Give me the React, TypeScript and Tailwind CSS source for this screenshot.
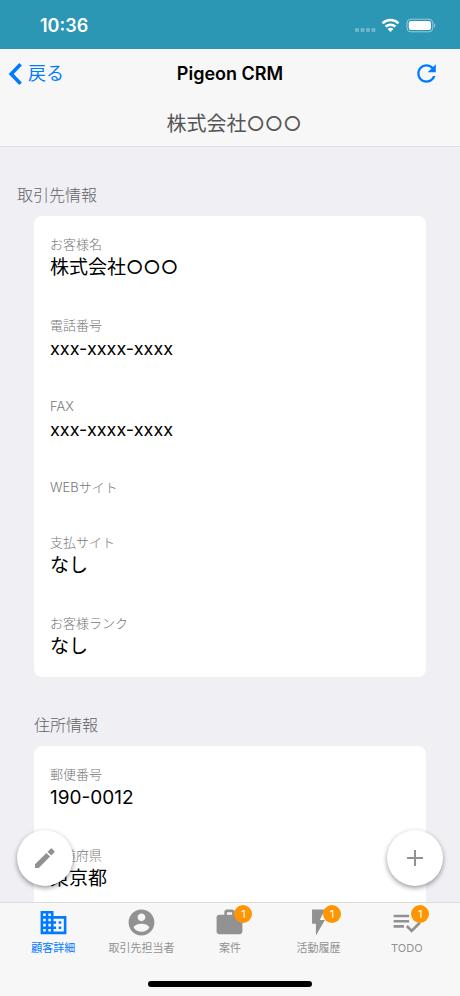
import type { ReactNode } from 'react';

interface Field {
  label: string;
  value?: string;
  phone?: boolean;
}

interface Tab {
  label: string;
  path: string;
  badge?: number;
}

const accountFields: Field[] = [
  { label: 'お客様名', value: '株式会社○○○' },
  { label: '電話番号', value: 'xxx-xxxx-xxxx', phone: true },
  { label: 'FAX', value: 'xxx-xxxx-xxxx', phone: true },
  { label: 'WEBサイト' },
  { label: '支払サイト', value: 'なし' },
  { label: 'お客様ランク', value: 'なし' },
];

const addressFields: Field[] = [
  { label: '郵便番号', value: '190-0012' },
  { label: '都道府県', value: '東京都' },
];

const tabs: Tab[] = [
  {
    label: '顧客詳細',
    path: 'M12 7V3H2v18h20V7H12zM6 19H4v-2h2v2zm0-4H4v-2h2v2zm0-4H4V9h2v2zm0-4H4V5h2v2zm4 12H8v-2h2v2zm0-4H8v-2h2v2zm0-4H8V9h2v2zm0-4H8V5h2v2zm10 12h-8v-2h2v-2h-2v-2h2v-2h-2V9h8v10zm-2-8h-2v2h2v-2zm0 4h-2v2h2v-2z',
  },
  {
    label: '取引先担当者',
    path: 'M12 2C6.48 2 2 6.48 2 12s4.48 10 10 10 10-4.48 10-10S17.52 2 12 2zm0 3c1.66 0 3 1.34 3 3s-1.34 3-3 3-3-1.34-3-3 1.34-3 3-3zm0 14.2c-2.5 0-4.71-1.28-6-3.22.03-1.99 4-3.08 6-3.08 1.99 0 5.97 1.09 6 3.08-1.29 1.94-3.5 3.22-6 3.22z',
  },
  {
    label: '案件',
    path: 'M20 6h-4V4c0-1.11-.89-2-2-2h-4c-1.11 0-2 .89-2 2v2H4c-1.11 0-1.99.89-1.99 2L2 19c0 1.11.89 2 2 2h16c1.11 0 2-.89 2-2V8c0-1.11-.89-2-2-2zm-6 0h-4V4h4v2z',
    badge: 1,
  },
  { label: '活動履歴', path: 'M7 2v11h3v9l7-12h-4l4-8z', badge: 1 },
  {
    label: 'TODO',
    path: 'M14 10H2v2h12v-2zm0-4H2v2h12V6zM2 16h8v-2H2v2zm19.5-4.5L23 13l-6.99 7-4.51-4.5L13 14l3.01 3 5.49-5.5z',
    badge: 1,
  },
];

function StatusBar() {
  return (
    <div className="flex h-[49px] shrink-0 items-center justify-between bg-[#2c97b5] pl-10 pr-6 pt-[2px] text-white">
      <span className="text-[18px] font-semibold leading-6">10:36</span>
      <svg viewBox="0 0 82 16" className="h-4 w-[82px]" fill="currentColor">
        <g opacity="0.3">
          <rect x="1" y="10" width="4" height="4" rx="1" />
          <rect x="6.5" y="10" width="4" height="4" rx="1" />
          <rect x="12" y="10" width="4" height="4" rx="1" />
          <rect x="17.5" y="10" width="4" height="4" rx="1" />
        </g>
        <g fill="none" stroke="currentColor" strokeWidth="2.5">
          <path d="M28.5 5.4a11.4 11.4 0 0 1 16 0" />
          <path d="M31.6 8.7a7 7 0 0 1 9.8 0" />
        </g>
        <path d="M33.6 11.1a4 4 0 0 1 5.8 0L36.5 14z" />
        <rect x="53" y="1.2" width="25.8" height="12.6" rx="3.8" fill="none" stroke="currentColor" opacity="0.5" />
        <rect x="54.8" y="3" width="22.2" height="9" rx="2.2" />
        <path d="M80 5.3v4.4c1.8-.8 1.8-3.6 0-4.4z" opacity="0.5" />
      </svg>
    </div>
  );
}

function Header() {
  return (
    <header className="shrink-0 border-b border-[#dedee2] bg-[#f7f7f7]">
      <div className="grid h-[49px] grid-cols-3 items-center px-2">
        <button className="flex items-center gap-[6px] justify-self-start text-[18px] leading-6 text-[#007aff]">
          <svg viewBox="0 0 14 22" className="h-[22px] w-[14px]" fill="none" stroke="currentColor" strokeWidth="3.6">
            <path d="M12.6 1.3 3.2 11l9.4 9.7" />
          </svg>
          戻る
        </button>
        <h1 className="text-center text-[18px] font-semibold leading-6 whitespace-nowrap text-black">Pigeon CRM</h1>
        <button aria-label="更新" className="justify-self-end pr-3 text-[#007aff]">
          <svg viewBox="0 0 512 512" className="size-[27px]" fill="currentColor">
            <path d="M256 388c-72.597 0-132-59.405-132-132 0-72.601 59.403-132 132-132 36.3 0 69.299 15.4 92.406 39.601L278 234h154V80l-51.698 51.702C348.406 99.798 304.406 80 256 80c-96.797 0-176 79.203-176 176s78.094 176 176 176c81.045 0 148.287-54.134 169.401-128H378.85c-18.745 49.561-67.138 84-122.85 84z" />
          </svg>
        </button>
      </div>
      <h2 className="pt-3 pb-2 pl-2 text-center text-[20px] leading-7 text-[#555]">株式会社○○○</h2>
    </header>
  );
}

function FieldCard({ fields }: { fields: Field[] }) {
  return (
    <dl className="mx-[34px] flex flex-col gap-[35px] rounded-lg bg-white px-4 py-[18px]">
      {fields.map((field) => (
        <div key={field.label}>
          <dt className="text-[13px] font-light leading-5 text-[#777]">{field.label}</dt>
          {field.value && (
            <dd className={`pt-[2px] leading-6 text-black ${field.phone ? 'text-[18px]' : 'text-[19px]'}`}>
              {field.value}
            </dd>
          )}
        </div>
      ))}
    </dl>
  );
}

function FloatingButton({ label, className, children }: { label: string; className: string; children: ReactNode }) {
  return (
    <button
      aria-label={label}
      className={`absolute bottom-4 flex size-14 items-center justify-center rounded-full bg-white text-[#919191] shadow-[0_2px_5px_rgba(0,0,0,0.4)] ${className}`}
    >
      {children}
    </button>
  );
}

function TabBar() {
  return (
    <nav className="shrink-0 border-t border-[#dcdcdf] bg-[#f7f7f7] px-[9px] pb-[9px]">
      <div className="grid grid-cols-5">
        {tabs.map((tab, i) => (
          <button
            key={tab.label}
            className={`flex flex-col items-center gap-[2px] pt-1 ${i === 0 ? 'text-[#007aff]' : 'text-[#929292]'}`}
          >
            <span className="relative">
              <svg viewBox="0 0 24 24" className="size-[31px]" fill="currentColor">
                <path d={tab.path} />
              </svg>
              {tab.badge && (
                <span className="absolute -top-[2px] -right-[7px] flex size-[18px] items-center justify-center rounded-full bg-[#ff9500] text-[11px] leading-4 text-white">
                  {tab.badge}
                </span>
              )}
            </span>
            <span className="text-[11px] leading-4">{tab.label}</span>
          </button>
        ))}
      </div>
      <div className="mx-auto mt-[25px] h-[6px] w-[164px] rounded-full bg-black" />
    </nav>
  );
}

export default function App() {
  return (
    <div className="flex h-screen flex-col bg-[#efeff4] font-[Inter,'Noto_Sans_CJK_JP',sans-serif]">
      <StatusBar />
      <Header />
      <div className="relative min-h-0 flex-1">
        <main className="h-full overflow-hidden">
          <section>
            <h3 className="px-[17px] pt-9 pb-[9px] text-[16px] font-light leading-6 text-[#636366]">取引先情報</h3>
            <FieldCard fields={accountFields} />
          </section>
          <section>
            <h3 className="px-[34px] pt-9 pb-[9px] text-[16px] font-light leading-6 text-[#636366]">住所情報</h3>
            <FieldCard fields={addressFields} />
          </section>
        </main>
        <FloatingButton label="編集" className="left-[17px]">
          <svg viewBox="0 0 20 20" className="size-5" fill="currentColor">
            <path d="M0 16.3 11.4 4.9l3.7 3.7L3.7 20H0z" />
            <path d="M12.5 3.8 15.6.7q.7-.7 1.4 0l2.3 2.3q.7.7 0 1.4l-3.1 3.1z" />
          </svg>
        </FloatingButton>
        <FloatingButton label="追加" className="right-[17px]">
          <svg viewBox="0 0 16 16" className="size-4" fill="none" stroke="currentColor" strokeWidth="2">
            <path d="M8 0v16M0 8h16" />
          </svg>
        </FloatingButton>
      </div>
      <TabBar />
    </div>
  );
}
